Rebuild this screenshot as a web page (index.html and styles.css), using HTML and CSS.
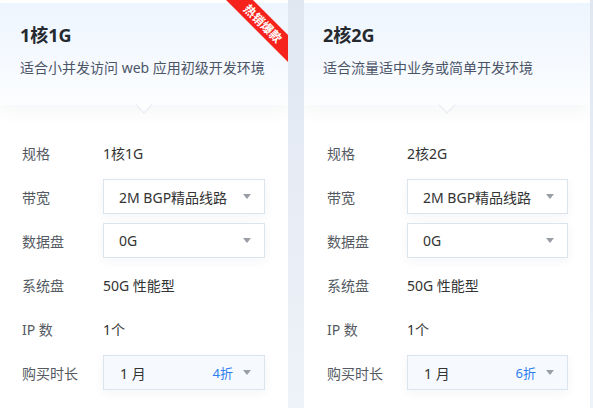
FILE: index.html
```html
<!DOCTYPE html>
<html lang="zh-CN">
<head>
<meta charset="utf-8">
<title>套餐</title>
<link rel="stylesheet" href="styles.css">
</head>
<body>
<div class="cards">
  <div class="card card-a">
    <div class="ribbon">热销爆款</div>
    <div class="head">
      <div class="title">1核1G</div>
      <div class="desc">适合小并发访问 web 应用初级开发环境</div>
    </div>
    <div class="body">
      <div class="row"><span class="label">规格</span><span class="value">1核1G</span></div>
      <div class="row"><span class="label">带宽</span><div class="select"><span class="sel-text">2M BGP精品线路</span><span class="caret"></span></div></div>
      <div class="row"><span class="label">数据盘</span><div class="select"><span class="sel-text">0G</span><span class="caret"></span></div></div>
      <div class="row"><span class="label">系统盘</span><span class="value">50G 性能型</span></div>
      <div class="row"><span class="label">IP 数</span><span class="value">1个</span></div>
      <div class="row"><span class="label">购买时长</span><div class="select select-blue"><span class="sel-text">1 月</span><span class="discount">4折</span><span class="caret"></span></div></div>
    </div>
  </div>
  <div class="card card-b">
    <div class="head">
      <div class="title">2核2G</div>
      <div class="desc">适合流量适中业务或简单开发环境</div>
    </div>
    <div class="body">
      <div class="row"><span class="label">规格</span><span class="value">2核2G</span></div>
      <div class="row"><span class="label">带宽</span><div class="select"><span class="sel-text">2M BGP精品线路</span><span class="caret"></span></div></div>
      <div class="row"><span class="label">数据盘</span><div class="select"><span class="sel-text">0G</span><span class="caret"></span></div></div>
      <div class="row"><span class="label">系统盘</span><span class="value">50G 性能型</span></div>
      <div class="row"><span class="label">IP 数</span><span class="value">1个</span></div>
      <div class="row"><span class="label">购买时长</span><div class="select select-blue"><span class="sel-text">1 月</span><span class="discount">6折</span><span class="caret"></span></div></div>
    </div>
  </div>
</div>
</body>
</html>
```

FILE: styles.css
```css
html, body {
  margin: 0;
  padding: 0;
}
body {
  width: 593px;
  height: 408px;
  overflow: hidden;
  background: linear-gradient(180deg, #e0e7f1 0%, #eef2f9 100%);
  font-family: "Noto Sans", "Noto Sans CJK SC", sans-serif;
}
.cards {
  display: grid;
  grid-template-columns: 288px 286px;
  column-gap: 16px;
  height: 408px;
}
.card {
  position: relative;
  overflow: hidden;
  background: #fff;
  padding-top: 3px;
  height: 420px;
  box-sizing: border-box;
}
.head {
  position: relative;
  height: 102px;
  box-sizing: border-box;
  padding: 20px 20px 0 20px;
  background: linear-gradient(180deg, #edf5fe 0%, #fcfdff 100%);
  box-shadow: 0 8px 14px rgba(40, 60, 100, 0.045);
  z-index: 1;
}
.card-b .head {
  padding-left: 19px;
}
.head::after {
  content: "";
  position: absolute;
  left: 50%;
  bottom: -6px;
  width: 11px;
  height: 11px;
  margin-left: -6px;
  background: #fcfdff;
  border-right: 1px solid #e6eaf0;
  border-bottom: 1px solid #e6eaf0;
  transform: rotate(45deg);
}
.title {
  font-size: 18px;
  font-weight: 700;
  line-height: 24px;
  color: #262a30;
}
.desc {
  margin-top: 11px;
  font-size: 14px;
  line-height: 20px;
  color: #4b5568;
}
.ribbon {
  position: absolute;
  top: 14px;
  right: -35px;
  width: 120px;
  height: 19px;
  line-height: 19px;
  text-align: center;
  background: #f5231c;
  color: #fff;
  font-size: 12px;
  font-weight: 700;
  transform: rotate(45deg);
  z-index: 2;
}
.body {
  padding: 30px 0 0 22px;
  display: flex;
  flex-direction: column;
  gap: 9px;
}
.card-b .body {
  padding-left: 23px;
}
.row {
  display: flex;
  align-items: center;
  height: 35px;
}
.label {
  width: 81px;
  flex: none;
  font-size: 14px;
  color: #555a62;
}
.card-b .label {
  width: 80px;
}
.value {
  font-size: 14px;
  color: #333;
}
.select {
  display: flex;
  align-items: center;
  width: 162px;
  height: 35px;
  box-sizing: border-box;
  border: 1px solid #dce4ee;
  background: #fff;
  padding: 0 13px 0 15px;
  box-shadow: 0 3px 10px rgba(30, 60, 120, 0.05);
}
.card-b .select {
  width: 161px;
}
.select-blue {
  background: #f6faff;
}
.sel-text {
  flex: 1;
  font-size: 14px;
  color: #333;
}
.select-blue .sel-text {
  padding-left: 1px;
}
.discount {
  font-size: 13px;
  color: #2f7ff0;
  margin-right: 10px;
}
.caret {
  width: 0;
  height: 0;
  border-left: 4.5px solid transparent;
  border-right: 4.5px solid transparent;
  border-top: 5px solid #9a9ea5;
}
```
